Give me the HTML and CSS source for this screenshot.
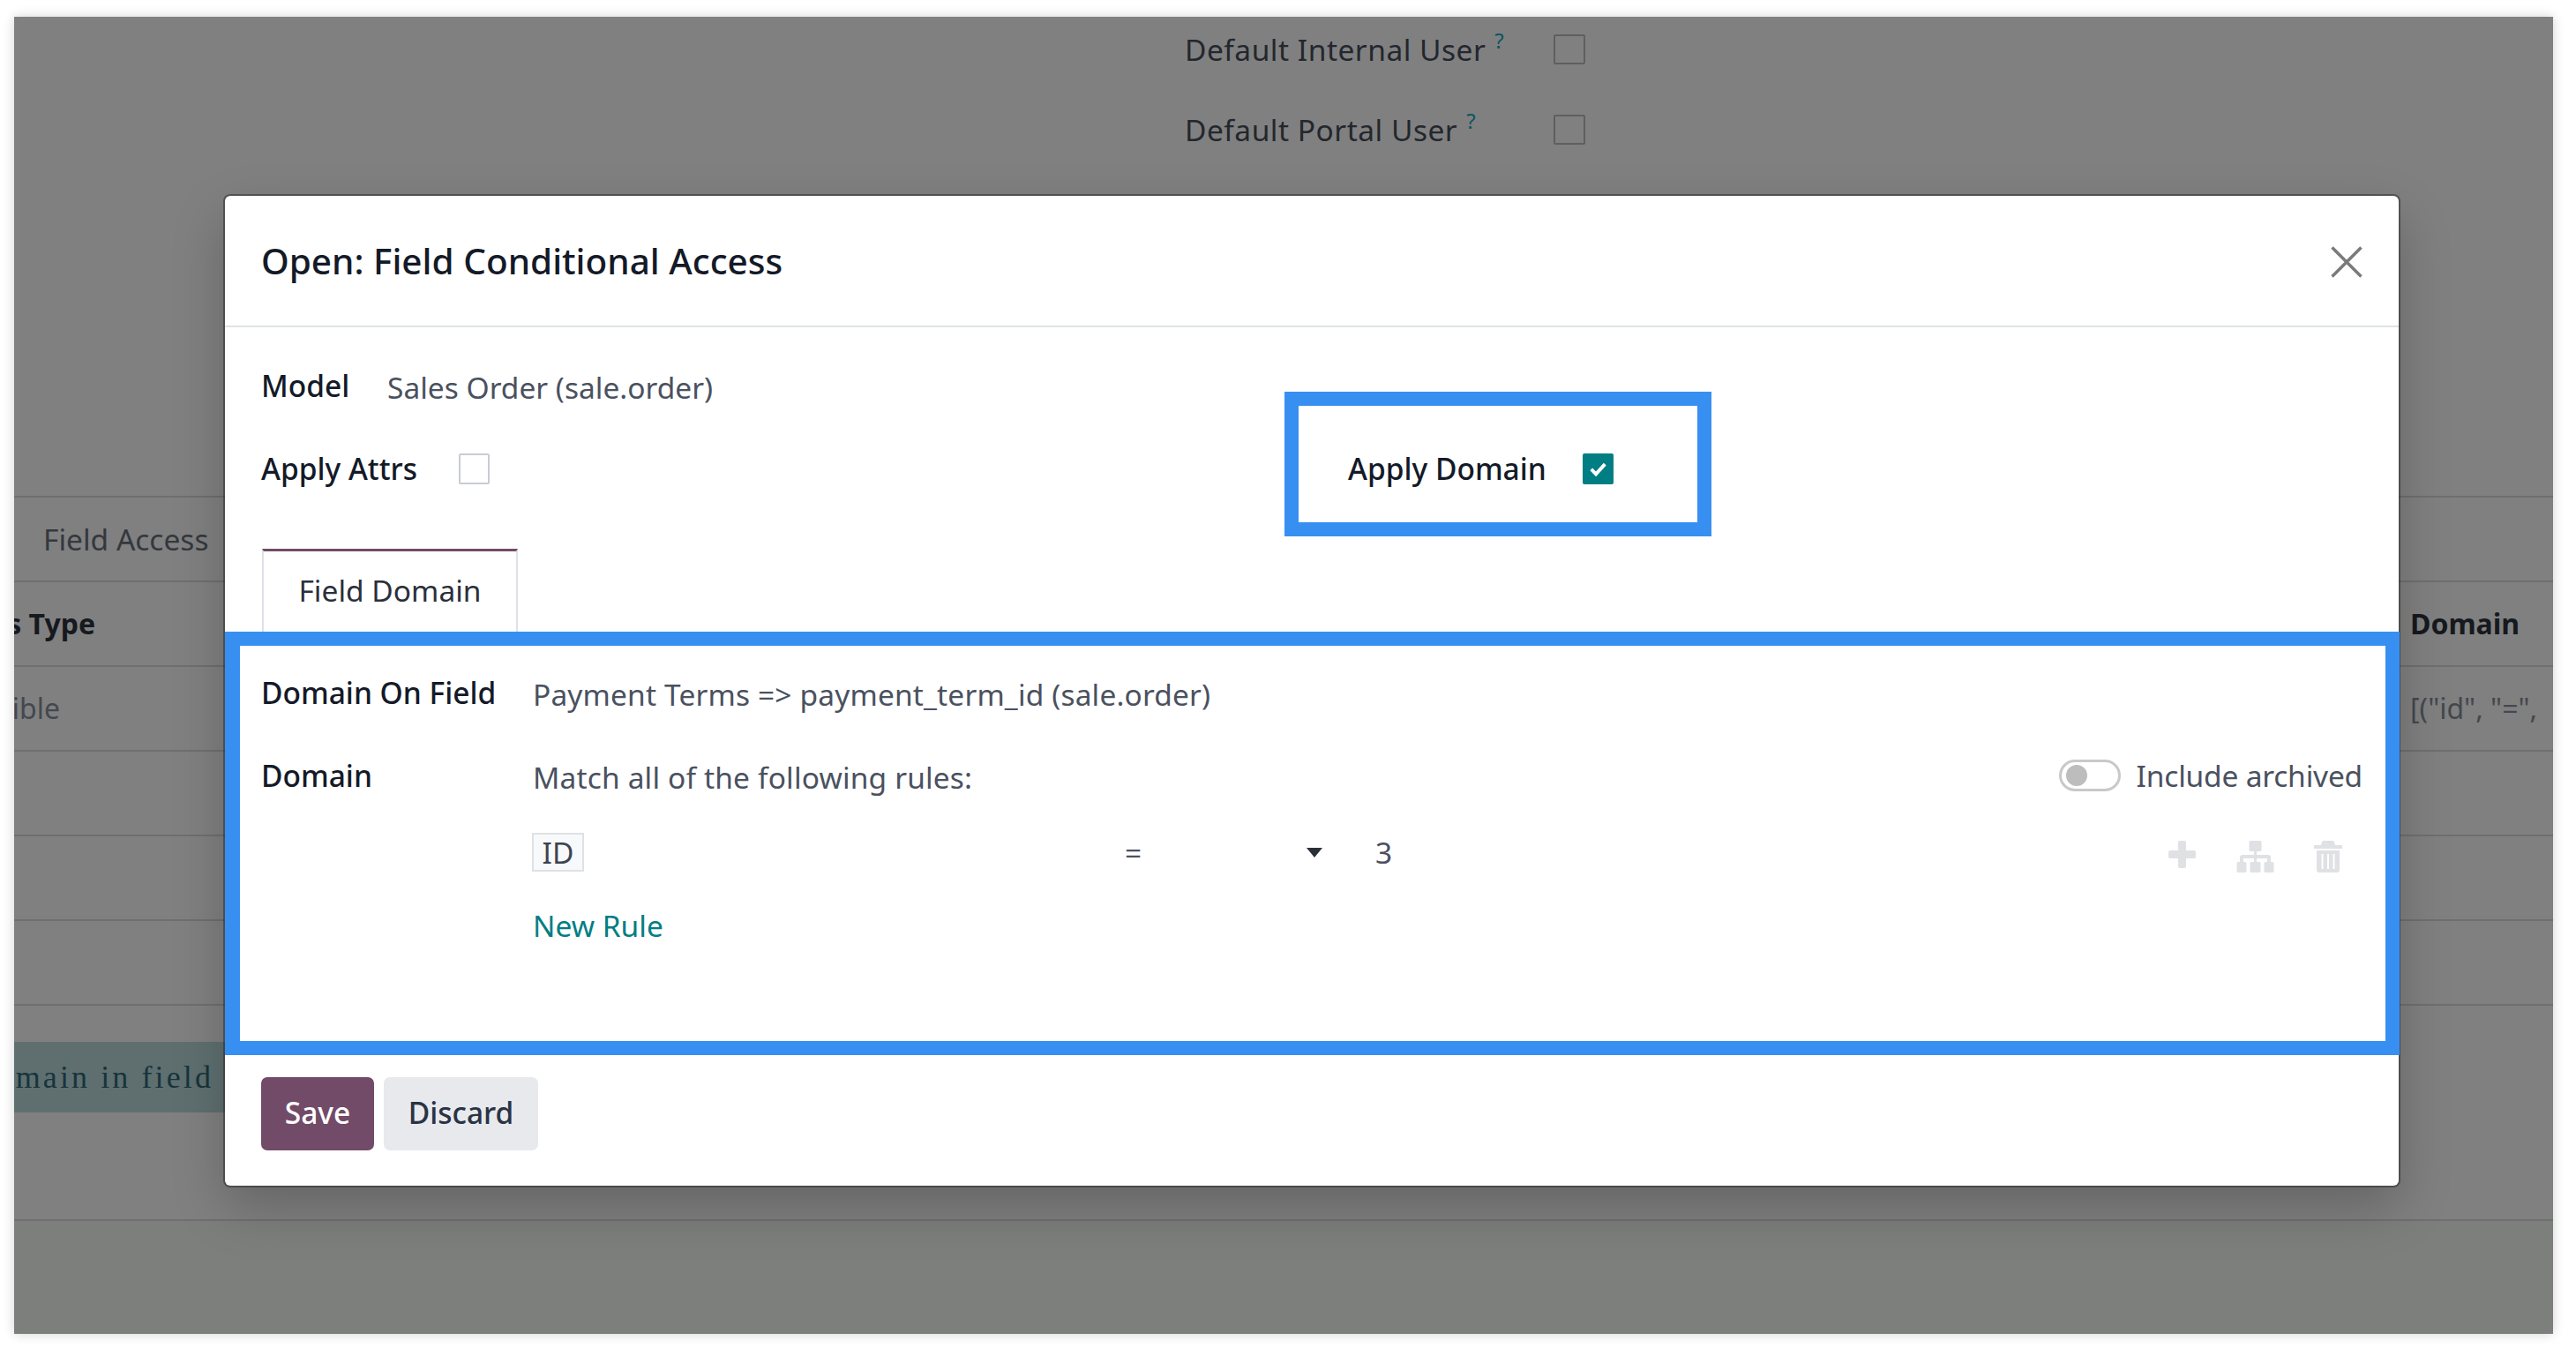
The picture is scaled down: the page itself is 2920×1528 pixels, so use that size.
FILE: index.html
```html
<!DOCTYPE html>
<html lang="en">
<head>
<meta charset="utf-8">
<title>Open: Field Conditional Access</title>
<link rel="stylesheet" href="styles.css">
</head>
<body>
<div class="screen">
  <section class="bg-settings">
    <div class="bg-setting"><span class="bg-setting-label">Default Internal User<sup class="help">?</sup></span><span class="bg-check"></span></div>
    <div class="bg-setting"><span class="bg-setting-label">Default Portal User<sup class="help">?</sup></span><span class="bg-check"></span></div>
  </section>
  <div class="bg-tabs"><span>Field Access</span></div>
  <div class="bg-row bg-row-head"><span class="bg-left"><span>Access Type</span></span><span class="bg-right">Domain</span></div>
  <div class="bg-row bg-row-muted"><span class="bg-left"><span>Visible</span></span><span class="bg-right">[("id", "=",</span></div>
  <div class="bg-row"></div>
  <div class="bg-row"></div>
  <div class="bg-row bg-row-short"></div>
  <div class="bg-row bg-row-tall"><div class="bg-band"><span>Domain in field</span></div></div>
  <div class="bg-foot"></div>

  <div class="dialog">
    <header class="dialog-header">
      <h4 class="dialog-title">Open: Field Conditional Access</h4>
      <svg class="close-icon" viewBox="0 0 36 36" aria-label="Close"><path d="M1.500 1.500 34.500 34.500M34.500 1.500 1.500 34.500"/></svg>
    </header>
    <div class="dialog-body">
      <div class="top-fields">
        <div class="field field-model"><span class="label label-model">Model</span><span class="value value-model">Sales Order (sale.order)</span></div>
        <div class="field"></div>
        <div class="field"><span class="label label-attrs">Apply Attrs</span><span class="checkbox"></span></div>
        <div class="field"><span class="label label-domain">Apply Domain</span>
          <span class="checkbox checkbox-on"><svg viewBox="0 0 36 36"><path d="M10 18.500 15.500 24 26 12.500"/></svg></span>
        </div>
      </div>
      <div class="tabs"><div class="tab">Field Domain</div></div>
      <div class="tab-pane">
        <div class="pane-row">
          <span class="label">Domain On Field</span>
          <span class="value value-low">Payment Terms =&gt; payment_term_id (sale.order)</span>
        </div>
        <div class="pane-row">
          <span class="label">Domain</span>
          <div class="builder">
            <div class="builder-head">
              <span class="value value-low">Match all of the following rules:</span>
              <span class="archived"><span class="toggle"><span class="knob"></span></span><span class="value value-archived">Include archived</span></span>
            </div>
            <div class="rule">
              <span class="chip">ID</span>
              <span class="op"><span class="value">=</span><span class="caret"></span></span>
              <span class="value">3</span>
              <span class="actions">
                <svg class="act act-plus" viewBox="0 0 33 33"><path d="M12 3a2 2 0 0 1 2-2h5a2 2 0 0 1 2 2v9h9a2 2 0 0 1 2 2v5a2 2 0 0 1-2 2h-9v9a2 2 0 0 1-2 2h-5a2 2 0 0 1-2-2v-9H3a2 2 0 0 1-2-2v-5a2 2 0 0 1 2-2h9z"/></svg>
                <svg class="act act-map" viewBox="0 0 43 37"><path d="M16 1h11a1.500 1.500 0 0 1 1.500 1.500v9a1.500 1.500 0 0 1-1.500 1.500h-4v4h13a3 3 0 0 1 3 3v5h2a1.500 1.500 0 0 1 1.500 1.500v9a1.500 1.500 0 0 1-1.500 1.500H33a1.500 1.500 0 0 1-1.500-1.500v-9a1.500 1.500 0 0 1 1.500-1.500h2v-4H23v4h3a1.500 1.500 0 0 1 1.500 1.500v9a1.500 1.500 0 0 1-1.500 1.500h-9a1.500 1.500 0 0 1-1.500-1.500v-9a1.500 1.500 0 0 1 1.500-1.500h3v-4H8v4h2a1.500 1.500 0 0 1 1.500 1.500v9A1.500 1.500 0 0 1 10 37H2a1.500 1.500 0 0 1-1.500-1.500v-9A1.500 1.500 0 0 1 2 25h2v-5a3 3 0 0 1 3-3h13v-4h-4a1.500 1.500 0 0 1-1.500-1.500v-9A1.500 1.500 0 0 1 16 1z"/></svg>
                <svg class="act act-trash" viewBox="0 0 32 37"><path d="M11 1h10a2 2 0 0 1 1.800 1.200L24 6h7a1 1 0 0 1 1 1v3H0V7a1 1 0 0 1 1-1h7l1.200-3.800A2 2 0 0 1 11 1zM3 12h26v22a3 3 0 0 1-3 3H6a3 3 0 0 1-3-3z"/><path class="act-cut" d="M9.500 16v17M16 16v17M22.500 16v17"/></svg>
              </span>
            </div>
            <a class="new-rule" href="#">New Rule</a>
          </div>
        </div>
      </div>
    </div>
    <footer class="dialog-footer">
      <button class="btn btn-save">Save</button>
      <button class="btn btn-discard">Discard</button>
    </footer>
  </div>

  <div class="mark mark-apply"></div>
  <div class="mark mark-pane"></div>
</div>
</body>
</html>
```

FILE: styles.css
```css
* { box-sizing: border-box; }
html, body { margin: 0; background: #fff; }
body { width: 2920px; height: 1528px; padding: 19px 26px 16px 16px; font-family: "Noto Sans", "Open Sans", sans-serif; font-size: 33.500px; line-height: 46px; color: #4a5160; overflow: hidden; }

.screen { position: relative; width: 2878px; height: 1493px; overflow: hidden; background: #808080; box-shadow: 0 0 12px rgba(0,0,0,.18); display: flex; flex-direction: column; color: #23272e; }

.bg-settings { height: 545px; padding: 12px 0 0 1327px; display: flex; flex-direction: column; gap: 41px; border-bottom: 2px solid #6f6f6f; }
.bg-setting { display: flex; align-items: center; height: 50px; }
.bg-setting-label { width: 418px; letter-spacing: .5px; white-space: nowrap; }
.help { font-size: 24px; color: #0d5560; margin-left: 10px; vertical-align: 14px; line-height: 0; }
.bg-check { width: 36px; height: 34px; border: 2px solid #5f5f5f; border-radius: 2px; }

.bg-tabs { height: 96px; padding-left: 33px; display: flex; align-items: center; color: #34383e; border-bottom: 2px solid #6f6f6f; }
.bg-row { height: 96px; display: flex; align-items: center; justify-content: space-between; border-bottom: 2px solid #6f6f6f; }
.bg-row-head { font-weight: 700; color: #16191e; font-size: 32px; }
.bg-row-muted { color: #44484e; font-size: 32px; }
.bg-left { width: 92px; display: flex; justify-content: flex-end; overflow: hidden; white-space: nowrap; }
.bg-row-muted .bg-left { width: 52px; }
.bg-right { width: 162px; white-space: nowrap; }
.bg-row-short { height: 96px; }
.bg-row-tall { height: 244px; align-items: flex-start; padding-top: 41px; }
.bg-band { width: 240px; height: 80px; background: #5f6f6f; display: flex; justify-content: flex-end; align-items: center; overflow: hidden; white-space: nowrap; padding-right: 14px; font-family: "Liberation Serif", serif; font-size: 36px; letter-spacing: 3.100px; color: #17343c; }
.bg-foot { flex: 1; background: #7d7f7d; }

.dialog { position: absolute; left: 239px; top: 203px; width: 2464px; height: 1122px; background: #fff; border-radius: 6px; display: flex; flex-direction: column; box-shadow: 0 0 0 2px rgba(40,40,40,.5), 0 24px 60px rgba(0,0,0,.22); color: #4a5160; }
.dialog-header { height: 149px; padding: 0 41px; flex: none; display: flex; align-items: center; justify-content: space-between; border-bottom: 2px solid #dee2e6; }
.dialog-title { margin: 0; font-size: 40.500px; font-weight: 500; color: #141a28; }
.close-icon { width: 36px; height: 36px; margin-top: 2px; fill: none; stroke: #7a7a7a; stroke-width: 3.500; }

.dialog-body { flex: 1; padding: 44px 41px 0; }
.top-fields { display: grid; grid-template-columns: 1232px 1fr; grid-auto-rows: 46px; row-gap: 47px; }
.field { display: flex; align-items: center; }
.label { color: #141a28; font-weight: 500; white-space: nowrap; }
.label-model { width: 143px; margin-top: -3px; }
.value-model { margin-top: 1px; }
.label-attrs { width: 224px; }
.label-domain { width: 266px; }
.checkbox { width: 35px; height: 35px; border: 2px solid #c8ccd2; border-radius: 2px; background: #fff; }
.checkbox-on { border: 0; background: #017e84; display: block; }
.checkbox-on svg { display: block; width: 35px; height: 35px; fill: none; stroke: #fff; stroke-width: 4; }

.tabs { margin-top: 68px; height: 95px; display: flex; }
.tab { width: 290px; height: 95px; margin-left: 1px; border: 2px solid #dee2e6; border-top: 3px solid #714b67; border-bottom: 0; display: flex; align-items: center; justify-content: center; padding-bottom: 4px; color: #2a303c; }

.tab-pane { padding-top: 45px; display: flex; flex-direction: column; gap: 48px; }
.pane-row { display: grid; grid-template-columns: 308px 1fr; min-height: 46px; align-items: start; }
.value { white-space: nowrap; }
.value-low { position: relative; top: 2px; letter-spacing: .15px; }
.value-archived { letter-spacing: -.2px; }

.builder { display: flex; flex-direction: column; }
.builder-head { height: 46px; display: flex; align-items: center; justify-content: space-between; }
.archived { display: flex; align-items: center; gap: 18px; }
.toggle { width: 70px; height: 36px; border: 3px solid #c9c9c9; border-radius: 18px; display: flex; align-items: center; padding-left: 5px; }
.knob { width: 24px; height: 24px; border-radius: 50%; background: #bdbdbd; }

.rule { margin: 40px 0 0 -1px; height: 44px; display: grid; grid-template-columns: 672px 284px 1fr auto; align-items: center; }
.chip { width: 59px; height: 44px; border: 2px solid #dee2e6; background: #f8f9fa; display: flex; align-items: center; justify-content: center; color: #3d4452; }
.op { display: flex; align-items: center; justify-content: space-between; padding-right: 60px; }
.caret { width: 0; height: 0; margin-top: 2px; border-left: 9px solid transparent; border-right: 9px solid transparent; border-top: 11px solid #2b3038; }
.actions { display: flex; align-items: flex-start; gap: 45px; padding-right: 23px; margin-top: 10px; }
.act { display: block; fill: #dfe1e5; }
.act-plus { width: 33px; height: 33px; margin-bottom: 4px; }
.act-map { width: 43px; height: 37px; }
.act-trash { width: 32px; height: 37px; }
.act-cut { fill: none; stroke: #fff; stroke-width: 2; }
.new-rule { margin-top: 40px; color: #017e84; text-decoration: none; align-self: flex-start; }

.dialog-footer { flex: none; padding: 0 41px 40px; display: flex; gap: 11px; }
.btn { height: 83px; border: 0; border-radius: 7px; font: inherit; font-weight: 500; padding: 0 0 3px; }
.btn-save { width: 128px; background: #714b67; color: #fff; }
.btn-discard { width: 175px; background: #e7e9ed; color: #2a3344; }

.mark { position: absolute; border: 16px solid #3790f1; pointer-events: none; }
.mark-apply { left: 1440px; top: 425px; width: 484px; height: 164px; }
.mark-pane { left: 239px; top: 697px; width: 2465px; height: 480px; border-left-width: 17px; }
```
